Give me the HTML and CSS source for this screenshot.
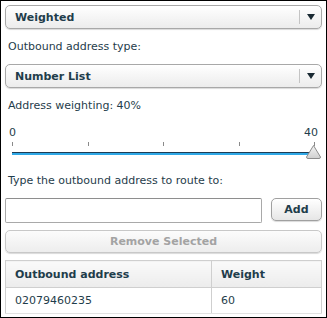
FILE: index.html
```html
<!DOCTYPE html>
<html lang="en">
<head>
    <meta charset="UTF-8">
    <title>Routing</title>
    <link rel="stylesheet" href="styles.css">
</head>
<body>
    <div class="panel">
        <div class="select">
            <span class="select-text">Weighted</span>
            <span class="select-arrow"></span>
        </div>
        <p class="label">Outbound address type:</p>
        <div class="select">
            <span class="select-text">Number List</span>
            <span class="select-arrow"></span>
        </div>
        <p class="label">Address weighting: 40%</p>

        <div class="slider">
            <div class="slider-labels">
                <span>0</span>
                <span>40</span>
            </div>
            <div class="ticks">
                <span></span><span></span><span></span><span></span><span></span>
            </div>
            <div class="track">
                <svg class="thumb" width="15" height="14" viewBox="0 0 15 14">
                    <defs>
                        <linearGradient id="tg" x1="0" y1="0" x2="0" y2="1">
                            <stop offset="0" stop-color="#f4f4f4"/>
                            <stop offset="1" stop-color="#cfcfcf"/>
                        </linearGradient>
                    </defs>
                    <path d="M7.5 0.5 L14.5 12 Q14.5 13.5 13 13.5 L2 13.5 Q0.5 13.5 0.5 12 Z" fill="url(#tg)" stroke="#8c8c8c"/>
                </svg>
            </div>
        </div>

        <p class="label">Type the outbound address to route to:</p>
        <div class="add-row">
            <input class="address-input" type="text">
            <button class="btn add-btn">Add</button>
        </div>
        <button class="btn remove-btn" disabled>Remove Selected</button>

        <table class="grid">
            <thead>
                <tr>
                    <th class="col-address">Outbound address</th>
                    <th>Weight</th>
                </tr>
            </thead>
            <tbody>
                <tr>
                    <td>02079460235</td>
                    <td>60</td>
                </tr>
            </tbody>
        </table>
    </div>
</body>
</html>
```

FILE: styles.css
```css
* {
    box-sizing: border-box;
}

body {
    margin: 0;
    font-family: "DejaVu Sans", Verdana, sans-serif;
    font-size: 11px;
    color: #1f3d4b;
    background-color: #ffffff;
}

.panel {
    width: 327px;
    height: 318px;
    border: 1px solid #000;
    padding: 4px 4px 0 4px;
    overflow: hidden;
}

.select {
    display: flex;
    align-items: center;
    height: 24px;
    border: 1px solid #a8a8a8;
    border-radius: 5px;
    background: linear-gradient(#ffffff, #ececec);
    box-shadow: 0 1px 1px rgba(0, 0, 0, 0.15);
}

.select-text {
    flex: 1;
    padding-left: 9px;
    font-weight: bold;
    font-size: 11px;
}

.select-arrow {
    width: 22px;
    height: 14px;
    border-left: 1px solid #c4c4c4;
    position: relative;
}

.select-arrow::after {
    content: "";
    position: absolute;
    left: 7px;
    top: 4px;
    border-left: 4px solid transparent;
    border-right: 4px solid transparent;
    border-top: 6px solid #1a2a33;
}

.label {
    margin: 0;
    padding: 11px 3px 10px 3px;
    line-height: 14px;
}

.slider {
    padding: 4px 2px 0 2px;
}

.slider-labels {
    display: flex;
    justify-content: space-between;
    line-height: 12px;
    padding-left: 2px;
    padding-right: 2px;
}

.ticks {
    display: flex;
    justify-content: space-between;
    margin: 3px 5px 0 5px;
    height: 4px;
}

.ticks span {
    width: 1px;
    height: 4px;
    background-color: #8a8a8a;
}

.track {
    position: relative;
    height: 3px;
    margin: 6px 7px 0 5px;
    border-top: 1px solid #1e3c55;
    background-color: #2fa8e6;
    margin-bottom: 8px;
}

.thumb {
    position: absolute;
    right: -8px;
    top: -8px;
}

.add-row {
    display: flex;
    gap: 9px;
    align-items: flex-start;
}

.address-input {
    flex: 1;
    height: 25px;
    border: 1px solid #a9a9a9;
    border-top-color: #8e8e8e;
    border-radius: 2px;
    font-family: inherit;
    font-size: 11px;
    padding: 0 4px;
}

.btn {
    font-family: inherit;
    font-size: 11px;
    font-weight: bold;
    color: #1f3d4b;
    height: 23px;
    border: 1px solid #a0a0a0;
    border-radius: 5px;
    background: linear-gradient(#ffffff, #e6e6e6);
    box-shadow: 0 1px 1px rgba(0, 0, 0, 0.15);
}

.add-btn {
    width: 51px;
}

.remove-btn {
    display: block;
    width: 100%;
    margin-top: 7px;
    color: #a3a3a3;
    border-color: #c8c8c8;
    background: linear-gradient(#fcfcfc, #ededed);
}

.grid {
    width: 100%;
    margin-top: 7px;
    border-collapse: collapse;
    border: 1px solid #cfcfcf;
}

.grid th {
    text-align: left;
    font-weight: bold;
    height: 27px;
    padding: 0 9px;
    background: linear-gradient(#fafafa, #ececec);
    border: 1px solid #cfcfcf;
}

.grid .col-address {
    width: 206px;
}

.grid td {
    height: 26px;
    padding: 0 9px;
    border-left: 1px solid #cfcfcf;
    border-right: 1px solid #cfcfcf;
    border-bottom: 1px solid #e2e2e2;
}
```
